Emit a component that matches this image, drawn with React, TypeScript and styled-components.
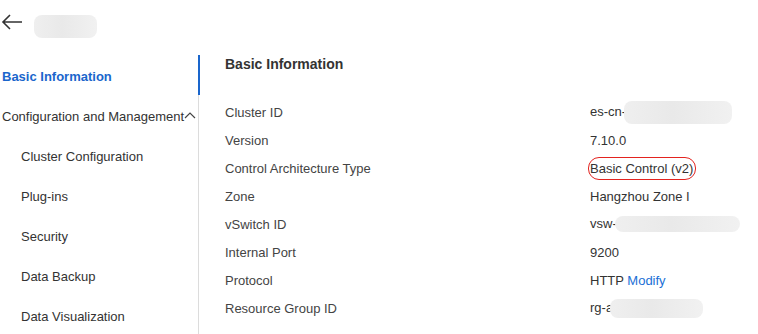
import styled, { createGlobalStyle } from "styled-components";

const GlobalStyle = createGlobalStyle`
    body {
        margin: 0;
        background: #fff;
        font-family: "Liberation Sans", Arial, sans-serif;
        color: #333;
    }
`;

const NAV = [
    { label: "Basic Information", level: 0, active: true },
    { label: "Configuration and Management", level: 0, group: true },
    { label: "Cluster Configuration", level: 1 },
    { label: "Plug-ins", level: 1 },
    { label: "Security", level: 1 },
    { label: "Data Backup", level: 1 },
    { label: "Data Visualization", level: 1 },
];

export default function App() {
    return (
        <Page>
            <GlobalStyle />
            <Header>
                <svg width="22" height="16" viewBox="0 0 22 16">
                    <path
                        d="M21 8H2M9 1L2 8l7 7"
                        fill="none"
                        stroke="#333"
                        strokeWidth="1.6"
                    />
                </svg>
                <Redacted $w={63} $h={23} $top={9} />
            </Header>

            <Main>
                <Sidebar>
                    <Indicator />
                    {NAV.map((item) => (
                        <NavItem
                            key={item.label}
                            $active={item.active}
                            $level={item.level}
                        >
                            {item.label}
                            {item.group && (
                                <svg width="12" height="8" viewBox="0 0 12 8">
                                    <path
                                        d="M1 7l5-5 5 5"
                                        fill="none"
                                        stroke="#444"
                                        strokeWidth="1.2"
                                    />
                                </svg>
                            )}
                        </NavItem>
                    ))}
                </Sidebar>

                <Content>
                    <Title>Basic Information</Title>
                    <Rows>
                        <Label>Cluster ID</Label>
                        <Value>
                            es-cn-
                            <Redacted $w={108} $h={23} $shift={-2} />
                        </Value>
                        <Label>Version</Label>
                        <Value>7.10.0</Value>
                        <Label>Control Architecture Type</Label>
                        <Value>
                            <Circled>Basic Control (v2)</Circled>
                        </Value>
                        <Label>Zone</Label>
                        <Value>Hangzhou Zone I</Value>
                        <Label>vSwitch ID</Label>
                        <Value>
                            vsw-
                            <Redacted $w={125} $h={16} $shift={-2} />
                        </Value>
                        <Label>Internal Port</Label>
                        <Value>9200</Value>
                        <Label>Protocol</Label>
                        <Value>
                            HTTP <Link>Modify</Link>
                        </Value>
                        <Label>Resource Group ID</Label>
                        <Value>
                            rg-a
                            <Redacted $w={93} $h={19} $shift={-3} />
                        </Value>
                    </Rows>
                </Content>
            </Main>
        </Page>
    );
}

const Page = styled.div`
    width: 758px;
    height: 334px;
    overflow: hidden;
`;

const Header = styled.div`
    display: flex;
    align-items: center;
    gap: 11px;
    height: 42px;
    padding-left: 1px;
    padding-top: 1px;
    box-sizing: border-box;
`;

const Redacted = styled.span<{
    $w: number;
    $h: number;
    $shift?: number;
    $top?: number;
}>`
    display: inline-block;
    width: ${(p) => p.$w}px;
    height: ${(p) => p.$h}px;
    margin-left: ${(p) => p.$shift ?? 0}px;
    margin-top: ${(p) => p.$top ?? 0}px;
    vertical-align: middle;
    border-radius: 8px;
    background: linear-gradient(90deg, #efefef, #e9e9e9 45%, #f1f1f1);
`;

const Main = styled.div`
    display: flex;
    margin-top: 13px;
`;

const Sidebar = styled.nav`
    position: relative;
    width: 198px;
    flex-shrink: 0;
    padding-top: 1px;
    border-right: 1px solid #dcdcdc;
    height: 300px;
`;

const Indicator = styled.div`
    position: absolute;
    right: -2px;
    top: 0;
    width: 2px;
    height: 40px;
    background: #1a66cc;
`;

const NavItem = styled.div<{ $active?: boolean; $level: number }>`
    display: flex;
    align-items: center;
    height: 40px;
    padding-left: ${(p) => (p.$level ? 21 : 2)}px;
    font-size: 13px;
    font-weight: ${(p) => (p.$active ? 700 : 400)};
    color: ${(p) => (p.$active ? "#1a66cc" : "#333")};
    white-space: nowrap;

    svg {
        margin-top: -2px;
    }
`;

const Content = styled.section`
    flex: 1;
    padding-left: 26px;
`;

const Title = styled.h2`
    margin: 0;
    height: 18px;
    line-height: 18px;
    font-size: 14px;
    font-weight: 700;
    color: #333;
`;

const Rows = styled.div`
    display: grid;
    grid-template-columns: 365px 1fr;
    grid-auto-rows: 28px;
    align-items: center;
    margin-top: 25px;
    font-size: 13px;
`;

const Label = styled.div`
    color: #444;
`;

const Value = styled.div`
    color: #333;
    white-space: nowrap;
`;

const Circled = styled.span`
    position: relative;

    &::after {
        content: "";
        position: absolute;
        left: -2px;
        right: -3px;
        top: -4px;
        bottom: -4px;
        border: 1.5px solid #e3231f;
        border-radius: 11px;
    }
`;

const Link = styled.span`
    color: #1a6fd6;
`;
